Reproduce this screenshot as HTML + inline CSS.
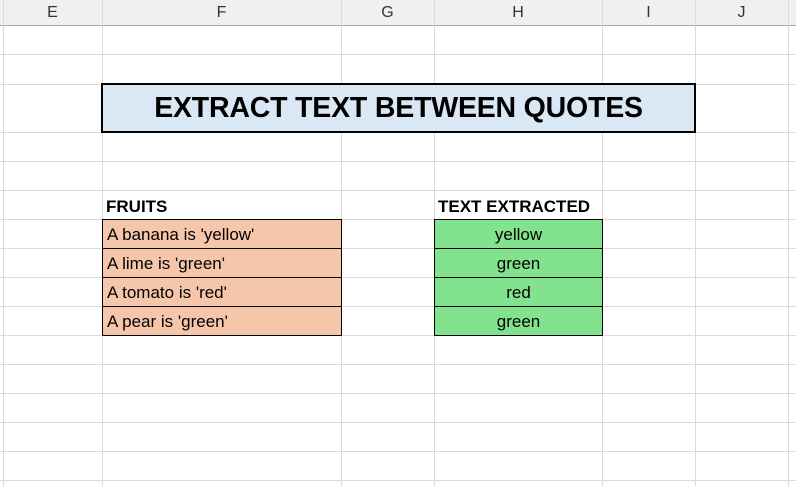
<!DOCTYPE html>
<html><head><meta charset="utf-8"><style>
body{margin:0;width:796px;height:486px;overflow:hidden;background:#fff;font-family:"Liberation Sans",sans-serif;position:relative}
.v{position:absolute;top:0;width:1px;height:486px;background:#dadada}
.h{position:absolute;left:0;height:1px;width:796px;background:#dadada}
.hdr{position:absolute;left:0;top:0;width:796px;height:25px;background:#f0f0f0;border-bottom:1px solid #a8a8a8}
.hl{position:absolute;top:0;height:25px;text-align:center;line-height:25px;font-size:16px;color:#333}
.c{position:absolute;box-sizing:border-box;border:1px solid #000;font-size:17px;line-height:30px;color:#000}
.o{background:#f6c6aa;padding-left:4px}
.g{background:#83e28e;text-align:center}
</style></head><body>
<div class="hdr"></div>
<div class="v" style="left:3px"></div><div class="v" style="left:102px"></div><div class="v" style="left:341px"></div><div class="v" style="left:434px"></div><div class="v" style="left:602px"></div><div class="v" style="left:695px"></div><div class="v" style="left:788px"></div>
<div class="hl" style="left:3px;width:99px">E</div>
<div class="hl" style="left:102px;width:239px">F</div>
<div class="hl" style="left:341px;width:93px">G</div>
<div class="hl" style="left:434px;width:168px">H</div>
<div class="hl" style="left:602px;width:93px">I</div>
<div class="hl" style="left:695px;width:93px">J</div>
<div class="h" style="top:54px"></div><div class="h" style="top:84px"></div><div class="h" style="top:132px"></div><div class="h" style="top:161px"></div><div class="h" style="top:190px"></div><div class="h" style="top:219px"></div><div class="h" style="top:248px"></div><div class="h" style="top:277px"></div><div class="h" style="top:306px"></div><div class="h" style="top:335px"></div><div class="h" style="top:364px"></div><div class="h" style="top:393px"></div><div class="h" style="top:422px"></div><div class="h" style="top:451px"></div><div class="h" style="top:480px"></div>
<div style="position:absolute;left:101px;top:83px;width:595px;height:50px;box-sizing:border-box;border:2px solid #000;background:#dae8f6;text-align:center;font-weight:bold;font-size:28.5px;line-height:47px;letter-spacing:-0.2px">EXTRACT TEXT BETWEEN QUOTES</div>
<div style="position:absolute;left:106px;top:196px;font-weight:bold;font-size:17px;line-height:22px;background:#fff">FRUITS</div>
<div style="position:absolute;left:438px;top:196px;font-weight:bold;font-size:17px;line-height:22px;background:#fff">TEXT EXTRACTED</div>
<div class="c o" style="left:102px;top:219px;width:240px;height:30px">A banana is 'yellow'</div>
<div class="c o" style="left:102px;top:248px;width:240px;height:30px">A lime is 'green'</div>
<div class="c o" style="left:102px;top:277px;width:240px;height:30px">A tomato is 'red'</div>
<div class="c o" style="left:102px;top:306px;width:240px;height:30px">A pear is 'green'</div>
<div class="c g" style="left:434px;top:219px;width:169px;height:30px">yellow</div>
<div class="c g" style="left:434px;top:248px;width:169px;height:30px">green</div>
<div class="c g" style="left:434px;top:277px;width:169px;height:30px">red</div>
<div class="c g" style="left:434px;top:306px;width:169px;height:30px">green</div>
</body></html>
